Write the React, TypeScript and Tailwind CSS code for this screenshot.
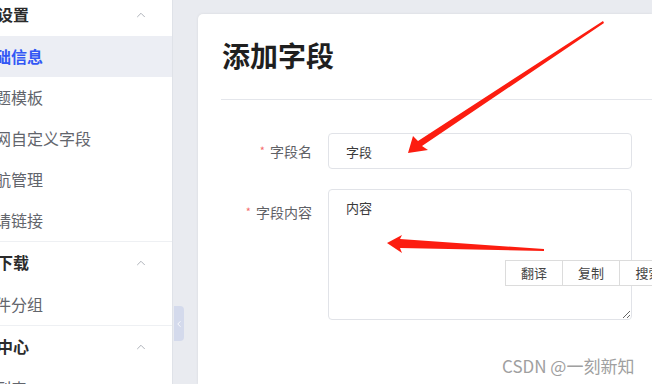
import React from 'react';
import { ChevronUp, ChevronLeft } from 'lucide-react';

const groups = [
  { title: '设置', items: ['础信息', '题模板', '网自定义字段', '航管理', '请链接'], first: true },
  { title: '下载', items: ['件分组'] },
  { title: '中心', items: ['列表'] },
];

const Sidebar: React.FC = () => (
  <aside className="w-[173px] shrink-0 h-full bg-white border-r border-[#dfe2e8] overflow-hidden flex flex-col">
    {groups.map((g, gi) => (
      <div key={gi} className={`flex flex-col border-b border-[#eef0f3] ${g.first ? '-mt-[6px]' : ''}`}>
        <div className="h-[42px] shrink-0 flex items-center justify-between pr-[24px]">
          <span className="-ml-[3px] relative top-[-1px] text-[16px] font-bold text-[#2b2b2b] whitespace-nowrap">{g.title}</span>
          <ChevronUp className="w-[14px] h-[14px] text-[#a4a8b0]" strokeWidth={1.5} />
        </div>
        {g.items.map((it, i) => {
          const active = gi === 0 && i === 0;
          return (
            <div
              key={it}
              className={`h-[41px] shrink-0 flex items-center ${active ? 'bg-[#eceef4]' : ''}`}
            >
              <span
                className={`-ml-[5px] relative top-[-1px] text-[16px] whitespace-nowrap ${
                  active ? 'text-[#3358f4] font-bold' : 'text-[#62656c]'
                }`}
              >
                {it}
              </span>
            </div>
          );
        })}
      </div>
    ))}
  </aside>
);

export default function App() {
  return (
    <div
      className="relative w-[652px] h-[384px] overflow-hidden flex bg-[#e9ebf0]"
      style={{ fontFamily: '"Noto Sans CJK SC", "Noto Sans", sans-serif' }}
    >
      <Sidebar />

      {/* gutter with collapse handle */}
      <div className="w-[25px] shrink-0 flex flex-col">
        <button className="mt-[306px] ml-[1px] w-[10px] h-[35px] rounded-r-[4px] bg-[#d4daec] flex items-center justify-center">
          <ChevronLeft className="w-[10px] h-[10px] text-white" strokeWidth={2} />
        </button>
      </div>

      <main className="flex-1 pt-[14px] min-w-0">
        <div className="h-full bg-white rounded-tl-[5px] shadow-[0_0_3px_rgba(0,0,0,0.08)] pl-[23px] pt-[27px] flex flex-col">
          <h1 className="pl-[1px] text-[28px] leading-[28px] font-bold text-[#1f1f1f]">添加字段</h1>
          <div className="mt-[30px] h-px bg-[#e4e6eb]" />

          <div className="mt-[33px] flex flex-col gap-[20px] text-[14px]">
            <div className="flex items-start gap-[16px]">
              <label className="w-[91px] shrink-0 text-right leading-[36px] text-[#5f6166]">
                <span className="text-[#f56c6c] text-[11px] align-top relative top-[-1px] mr-[5px]">*</span>
                字段名
              </label>
              <input
                readOnly
                value="字段"
                className="w-[304px] h-[36px] border border-[#e1e3e8] rounded-[4px] pl-[17px] text-[13px] text-[#3a3a3a] outline-none"
              />
            </div>
            <div className="flex items-start gap-[16px]">
              <label className="w-[91px] shrink-0 text-right mt-[5px] leading-[36px] text-[#5f6166]">
                <span className="text-[#f56c6c] text-[11px] align-top relative top-[-1px] mr-[5px]">*</span>
                字段内容
              </label>
              <textarea
                readOnly
                defaultValue="内容"
                className="w-[304px] h-[131px] border border-[#e1e3e8] rounded-[4px] pl-[17px] pt-[8px] leading-[20px] text-[13px] text-[#3a3a3a] outline-none resize-y"
              />
            </div>
          </div>
        </div>
      </main>

      {/* selection popup */}
      <div className="absolute left-[505px] top-[260px] flex bg-white border border-[#dcdcdc] text-[13px] text-[#444]">
        <span className="w-[57px] h-[24px] flex items-center justify-center border-r border-[#dcdcdc]">翻译</span>
        <span className="w-[57px] h-[24px] flex items-center justify-center border-r border-[#dcdcdc]">复制</span>
        <span className="w-[57px] h-[24px] flex items-center justify-center">搜索</span>
      </div>

      {/* watermark */}
      <div className="absolute left-[502px] top-[354px] text-[17px] leading-[24px] text-[#a0a0a0] whitespace-nowrap">
        CSDN @一刻新知
      </div>

      {/* annotation arrows */}
      <svg className="absolute inset-0 pointer-events-none" width="652" height="384" viewBox="0 0 652 384">
        <polygon
          fill="#fc1d10"
          points="408,153 413,136 418,141 603,21 604,23 422,146 428,150"
        />
        <polygon
          fill="#fc1d10"
          points="387,243 402,235 400,239 544,249 544,251 400,248 402,253"
        />
      </svg>
    </div>
  );
}
